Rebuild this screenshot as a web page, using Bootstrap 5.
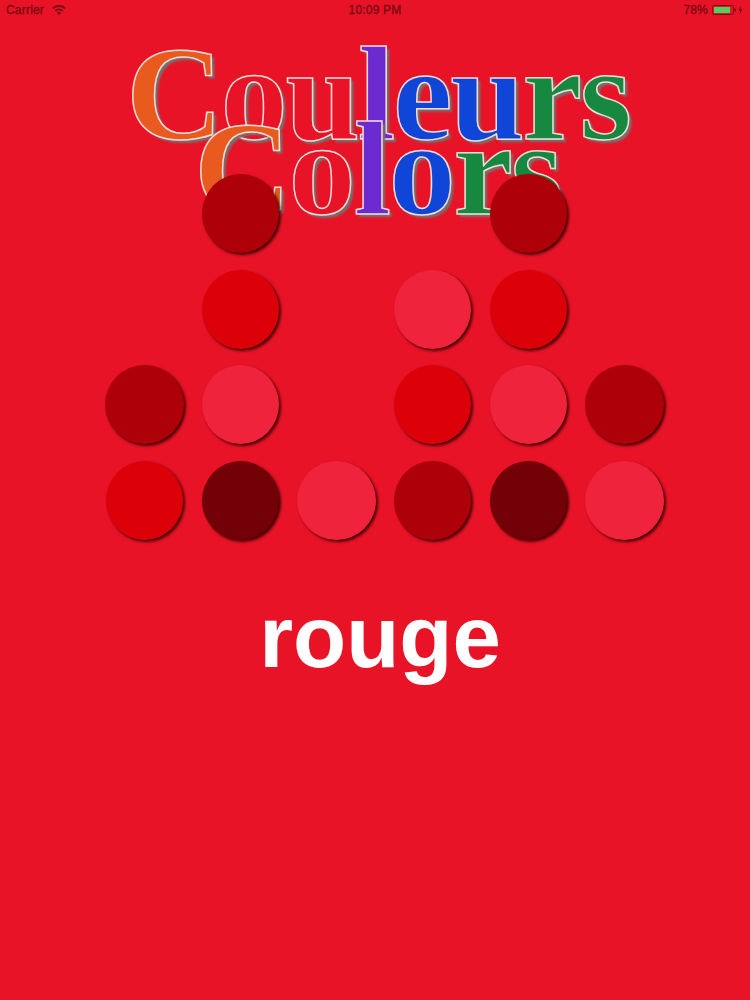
<!DOCTYPE html>
<html lang="fr">
<head>
<meta charset="utf-8">
<title>Couleurs Colors</title>
<link href="https://cdn.jsdelivr.net/npm/bootstrap@5.3.0/dist/css/bootstrap.min.css" rel="stylesheet">
<style>
html,body{height:100%;}
body{background:#e91327;overflow:hidden;font-family:"Liberation Sans",Arial,sans-serif;}
.stage{width:750px;height:1000px;}
.status-strip{height:20px;padding:0 6px;font-size:12px;line-height:20px;color:#7d0a14;letter-spacing:.2px;-webkit-text-stroke:.4px #7d0a14;}
.status-side{width:140px;}
.logo-box{height:146px;font-family:"Liberation Serif","Times New Roman",serif;font-size:134px;font-weight:700;line-height:72px;letter-spacing:-2.200px;white-space:nowrap;text-align:center;}
.logo-line{display:block;height:72px;-webkit-text-stroke:1.500px #f6dcd8;text-shadow:3px 3px 2px #77706c;}
.logo-two{margin-top:38px;margin-left:6px;height:75px;}
.logo-three{margin-left:5px;}
.l-orange{color:#e85a1e;}.l-red{color:#e91327;}.l-violet{color:#6c2bd0;}.l-blue{color:#1046d8;}.l-green{color:#17883f;}
.dot-grid{display:grid;grid-template-columns:repeat(6,96px);grid-auto-rows:95.5px;margin-left:96px;}
.dot-cell{display:flex;align-items:center;justify-content:center;}
.dot{width:77px;height:79px;border-radius:50%;box-shadow:2px 2px 3px rgba(50,0,0,.9);}
.dot-wide{width:79px;}
.c-dark{background:#ad0009;}.c-mid{background:#dc0009;}.c-light{background:#f0233c;}.c-deep{background:#730006;}
.word{font-size:87px;font-weight:700;color:#fff;line-height:100px;margin-top:39px;margin-left:10px;text-align:center;}
</style>
</head>
<body>
<main class="stage d-flex flex-column">
  <div class="status-strip d-flex justify-content-between align-items-center">
    <div class="status-side d-flex align-items-center gap-2">
      <span>Carrier</span>
      <svg width="14" height="11" viewBox="0 0 16 12" aria-hidden="true"><path d="M8 11.500 5.500 8.600a3.400 3.400 0 0 1 5 0ZM4.400 7.200 3 5.600a7.400 7.400 0 0 1 10 0l-1.400 1.600a5.400 5.400 0 0 0-7.200 0ZM1.900 4.400.300 2.700a11.300 11.300 0 0 1 15.400 0l-1.600 1.700a9 9 0 0 0-12.200 0Z" fill="#7d0a14"/></svg>
    </div>
    <span>10:09 PM</span>
    <div class="status-side d-flex align-items-center justify-content-end gap-1">
      <span>78%</span>
      <svg width="32" height="12" viewBox="0 0 32 12" aria-hidden="true"><rect x=".5" y="1.500" width="21" height="9" rx="2" fill="none" stroke="#7d0a14"/><rect x="2" y="3" width="16" height="6" fill="#46d35f"/><rect x="22.500" y="4.500" width="1.500" height="3" fill="#7d0a14"/><path d="M29 1.500 26.500 6.500h1.800L27.500 10.500 30.500 5h-1.800Z" fill="#7d0a14"/></svg>
    </div>
  </div>
  <div class="logo-box">
    <span class="logo-line logo-two"><span class="l-orange">C</span><span class="l-red">ou</span><span class="l-violet">l</span><span class="l-blue">eu</span><span class="l-green">rs</span></span>
    <span class="logo-line logo-three"><span class="l-orange">C</span><span class="l-red">o</span><span class="l-violet">l</span><span class="l-blue">o</span><span class="l-green">rs</span></span>
  </div>
  <section class="dot-grid">
    <div class="dot-cell"></div><div class="dot-cell"><div class="dot c-dark"></div></div><div class="dot-cell"></div><div class="dot-cell"></div><div class="dot-cell"><div class="dot c-dark"></div></div><div class="dot-cell"></div>
    <div class="dot-cell"></div><div class="dot-cell"><div class="dot c-mid"></div></div><div class="dot-cell"></div><div class="dot-cell"><div class="dot c-light"></div></div><div class="dot-cell"><div class="dot c-mid"></div></div><div class="dot-cell"></div>
    <div class="dot-cell"><div class="dot dot-wide c-dark"></div></div><div class="dot-cell"><div class="dot c-light"></div></div><div class="dot-cell"></div><div class="dot-cell"><div class="dot c-mid"></div></div><div class="dot-cell"><div class="dot c-light"></div></div><div class="dot-cell"><div class="dot dot-wide c-dark"></div></div>
    <div class="dot-cell"><div class="dot c-mid"></div></div><div class="dot-cell"><div class="dot c-deep"></div></div><div class="dot-cell"><div class="dot dot-wide c-light"></div></div><div class="dot-cell"><div class="dot c-dark"></div></div><div class="dot-cell"><div class="dot c-deep"></div></div><div class="dot-cell"><div class="dot dot-wide c-light"></div></div>
  </section>
  <div class="word">rouge</div>
</main>
<script src="https://cdn.jsdelivr.net/npm/bootstrap@5.3.0/dist/js/bootstrap.bundle.min.js"></script>
</body>
</html>
